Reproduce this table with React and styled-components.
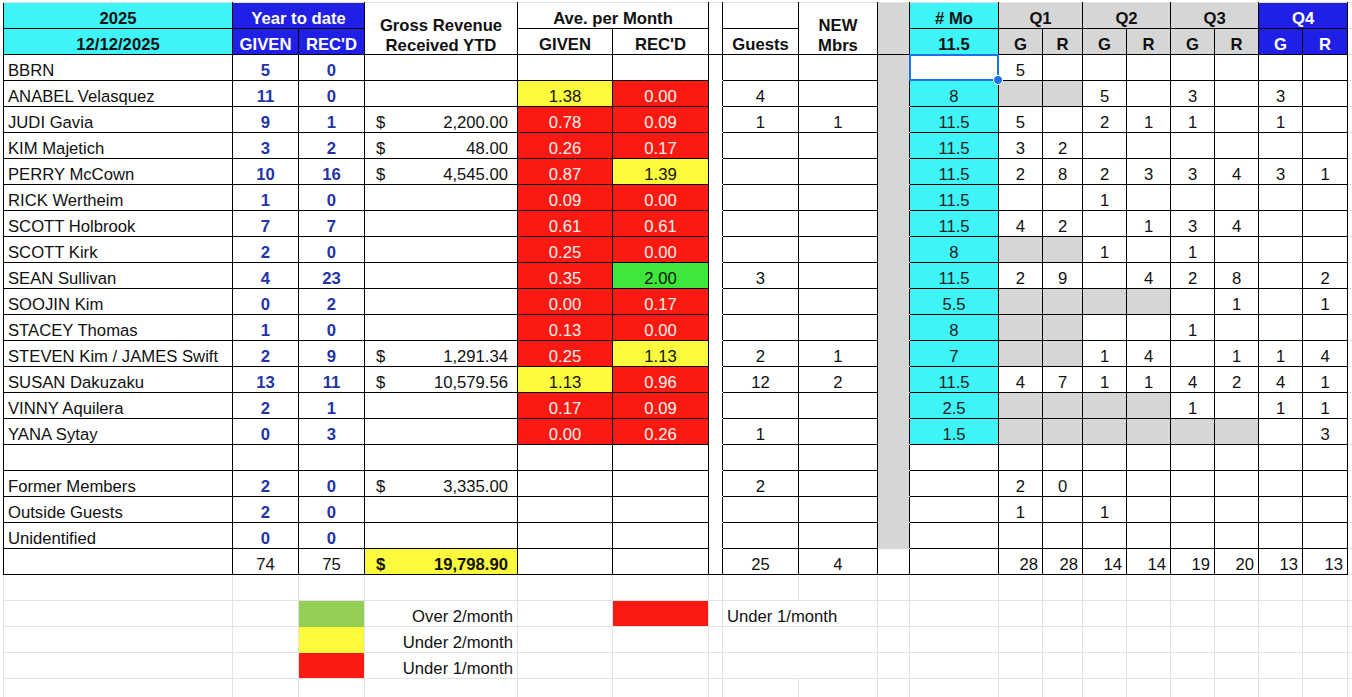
import React from "react";
import styled, { createGlobalStyle } from "styled-components";

const CYAN = "#3ff4f7";
const BLUE = "#1f1fe6";
const RED = "#fa1a12";
const YELLOW = "#fcfa3c";
const GREEN = "#3ee83a";
const LEGEND_GREEN = "#93cf57";
const GRAY = "#d6d6d6";
const GRID = "#e2e2e2";
const INK = "#111";
const NAVY = "#2333a8";
const RED_TEXT = "#fff1ee";

const COLS = [229, 66, 66, 153, 95, 96, 14, 76, 79, 32, 89, 44, 40, 44, 44, 44, 44, 44, 45, 60];

const members = [
  { name: "BBRN", given: 5, recd: 0, mo: "", q: ["5", "", "", "", "", "", "", ""], gray: 0, selected: true },
  { name: "ANABEL Velasquez", given: 11, recd: 0, ave: ["1.38", "0.00"], guests: "4", mo: "8", q: ["", "", "5", "", "3", "", "3", ""], gray: 2 },
  { name: "JUDI Gavia", given: 9, recd: 1, rev: "2,200.00", ave: ["0.78", "0.09"], guests: "1", newM: "1", mo: "11.5", q: ["5", "", "2", "1", "1", "", "1", ""], gray: 0 },
  { name: "KIM Majetich", given: 3, recd: 2, rev: "48.00", ave: ["0.26", "0.17"], mo: "11.5", q: ["3", "2", "", "", "", "", "", ""], gray: 0 },
  { name: "PERRY McCown", given: 10, recd: 16, rev: "4,545.00", ave: ["0.87", "1.39"], mo: "11.5", q: ["2", "8", "2", "3", "3", "4", "3", "1"], gray: 0 },
  { name: "RICK Wertheim", given: 1, recd: 0, ave: ["0.09", "0.00"], mo: "11.5", q: ["", "", "1", "", "", "", "", ""], gray: 0 },
  { name: "SCOTT Holbrook", given: 7, recd: 7, ave: ["0.61", "0.61"], mo: "11.5", q: ["4", "2", "", "1", "3", "4", "", ""], gray: 0 },
  { name: "SCOTT Kirk", given: 2, recd: 0, ave: ["0.25", "0.00"], mo: "8", q: ["", "", "1", "", "1", "", "", ""], gray: 2 },
  { name: "SEAN Sullivan", given: 4, recd: 23, ave: ["0.35", "2.00"], guests: "3", mo: "11.5", q: ["2", "9", "", "4", "2", "8", "", "2"], gray: 0 },
  { name: "SOOJIN Kim", given: 0, recd: 2, ave: ["0.00", "0.17"], mo: "5.5", q: ["", "", "", "", "", "1", "", "1"], gray: 4 },
  { name: "STACEY Thomas", given: 1, recd: 0, ave: ["0.13", "0.00"], mo: "8", q: ["", "", "", "", "1", "", "", ""], gray: 2 },
  { name: "STEVEN Kim / JAMES Swift", given: 2, recd: 9, rev: "1,291.34", ave: ["0.25", "1.13"], guests: "2", newM: "1", mo: "7", q: ["", "", "1", "4", "", "1", "1", "4"], gray: 2 },
  { name: "SUSAN Dakuzaku", given: 13, recd: 11, rev: "10,579.56", ave: ["1.13", "0.96"], guests: "12", newM: "2", mo: "11.5", q: ["4", "7", "1", "1", "4", "2", "4", "1"], gray: 0 },
  { name: "VINNY Aquilera", given: 2, recd: 1, ave: ["0.17", "0.09"], mo: "2.5", q: ["", "", "", "", "1", "", "1", "1"], gray: 4 },
  { name: "YANA Sytay", given: 0, recd: 3, ave: ["0.00", "0.26"], guests: "1", mo: "1.5", q: ["", "", "", "", "", "", "", "3"], gray: 6 },
];

const others = [
  { name: "Former Members", given: 2, recd: 0, rev: "3,335.00", guests: "2", q: ["2", "0", "", "", "", "", "", ""] },
  { name: "Outside Guests", given: 2, recd: 0, q: ["1", "", "1", "", "", "", "", ""] },
  { name: "Unidentified", given: 0, recd: 0, q: ["", "", "", "", "", "", "", ""] },
];

const quarterTotals = ["28", "28", "14", "14", "19", "20", "13", "13"];

const tone = (v) => {
  const n = parseFloat(v);
  if (n >= 2) return { bg: GREEN, color: INK };
  if (n >= 1) return { bg: YELLOW, color: INK };
  return { bg: RED, color: RED_TEXT };
};

const GlobalStyle = createGlobalStyle`
  html, body {
    margin: 0;
    padding: 0;
    background: #fff;
    overflow: hidden;
  }
  body {
    font-family: "Liberation Sans", Arial, sans-serif;
  }
`;

const Sheet = styled.table`
  border-collapse: collapse;
  table-layout: fixed;
  width: ${COLS.reduce((a, b) => a + b, 0)}px;
  margin: 2px 0 0 3px;
  font-size: 16.67px;
  color: ${INK};
`;

const Col = styled.col`
  width: ${(p) => p.$w}px;
`;

const Row = styled.tr`
  height: 26px;
`;

const Cell = styled.td`
  position: ${(p) => (p.$anchor ? "relative" : "static")};
  padding: 0 4px;
  line-height: 19.5px;
  vertical-align: bottom;
  white-space: nowrap;
  overflow: visible;
  text-align: ${(p) => p.$align || "center"};
  background: ${(p) => p.$bg || "#fff"};
  color: ${(p) => p.$color || INK};
  font-weight: ${(p) => (p.$bold ? 700 : 400)};
  border: 1px solid #000;
  border-top-color: ${(p) => p.$top || "#000"};
  border-right-color: ${(p) => p.$right || "#000"};
  border-bottom-color: ${(p) => p.$bottom || "#000"};
`;

const GridCell = styled.td`
  padding: 0 4px;
  line-height: 19.5px;
  vertical-align: bottom;
  white-space: nowrap;
  text-align: ${(p) => p.$align || "left"};
  background: ${(p) => p.$bg || "#fff"};
  border: 1px solid ${GRID};
  border-top-color: ${(p) => p.$top || GRID};
  border-bottom-color: ${(p) => p.$bottom || GRID};
`;

const HeadStack = styled.span`
  display: block;
  line-height: 20px;
  transform: translateY(2px);
`;

const Money = styled.span`
  display: flex;
  justify-content: space-between;
  padding: 0 5px 0 7px;
`;

const Selection = styled.span`
  position: absolute;
  left: -1px;
  top: -1px;
  right: -1px;
  bottom: -1px;
  border: 2px solid #1a73e8;
  pointer-events: none;
`;

const Handle = styled.span`
  position: absolute;
  right: -6px;
  bottom: -6px;
  width: 8px;
  height: 8px;
  border-radius: 50%;
  background: #1a73e8;
  border: 1px solid #fff;
`;

const Count = ({ value }) => (
  <Cell $bold $color={NAVY}>
    {value}
  </Cell>
);

const Revenue = ({ value, bold, bg }) => (
  <Cell $align="left" $bold={bold} $bg={bg}>
    {value && (
      <Money>
        <span>$</span>
        <span>{value}</span>
      </Money>
    )}
  </Cell>
);

const Average = ({ value }) => {
  if (!value) return <Cell />;
  const t = tone(value);
  return (
    <Cell $bg={t.bg} $color={t.color}>
      {value}
    </Cell>
  );
};

const Spacer = ({ bottom = "#fff" }) => <Cell $bottom={bottom} />;

const GrayBar = ({ bottom = GRAY }) => <Cell $bg={GRAY} $bottom={bottom} />;

const Quarters = ({ values, gray = 0, align }) =>
  values.map((v, i) => (
    <Cell key={i} $bg={i < gray ? GRAY : "#fff"} $align={align}>
      {v}
    </Cell>
  ));

const Header = () => (
  <>
    <Row>
      <Cell $bg={CYAN} $bold $top={GRID}>2025</Cell>
      <Cell colSpan={2} $bg={BLUE} $color="#fff" $bold $top={GRID}>Year to date</Cell>
      <Cell rowSpan={2} $bold $top={GRID}>
        <HeadStack>
          Gross Revenue
          <br />
          Received YTD
        </HeadStack>
      </Cell>
      <Cell colSpan={2} $bold $top={GRID}>Ave. per Month</Cell>
      <Cell rowSpan={2} $top={GRID} />
      <Cell $top={GRID} />
      <Cell rowSpan={2} $bold $top={GRID}>
        <HeadStack>
          NEW
          <br />
          Mbrs
        </HeadStack>
      </Cell>
      <Cell rowSpan={2} $bg={GRAY} $top={GRID} />
      <Cell $bg={CYAN} $bold $top={GRID}># Mo</Cell>
      <Cell colSpan={2} $bg={GRAY} $bold $top={GRID}>Q1</Cell>
      <Cell colSpan={2} $bg={GRAY} $bold $top={GRID}>Q2</Cell>
      <Cell colSpan={2} $bg={GRAY} $bold $top={GRID}>Q3</Cell>
      <Cell colSpan={2} $bg={BLUE} $color="#fff" $bold $top={GRID}>Q4</Cell>
      <GridCell />
    </Row>
    <Row>
      <Cell $bg={CYAN} $bold>12/12/2025</Cell>
      <Cell $bg={BLUE} $color="#fff" $bold>GIVEN</Cell>
      <Cell $bg={BLUE} $color="#fff" $bold>REC'D</Cell>
      <Cell $bold>GIVEN</Cell>
      <Cell $bold>REC'D</Cell>
      <Cell $bold>Guests</Cell>
      <Cell $bg={CYAN} $bold>11.5</Cell>
      {["G", "R", "G", "R", "G", "R"].map((l, i) => (
        <Cell key={i} $bg={GRAY} $bold>{l}</Cell>
      ))}
      <Cell $bg={BLUE} $color="#fff" $bold>G</Cell>
      <Cell $bg={BLUE} $color="#fff" $bold>R</Cell>
      <GridCell />
    </Row>
  </>
);

const MemberRow = ({ m }) => (
  <Row>
    <Cell $align="left">{m.name}</Cell>
    <Count value={m.given} />
    <Count value={m.recd} />
    <Revenue value={m.rev} />
    <Average value={m.ave && m.ave[0]} />
    <Average value={m.ave && m.ave[1]} />
    <Spacer />
    <Cell>{m.guests}</Cell>
    <Cell>{m.newM}</Cell>
    <GrayBar />
    <Cell $bg={m.selected ? "#fff" : CYAN} $color="#222" $anchor={m.selected}>
      {m.mo}
      {m.selected && (
        <Selection>
          <Handle />
        </Selection>
      )}
    </Cell>
    <Quarters values={m.q} gray={m.gray} />
    <GridCell />
  </Row>
);

const OtherRow = ({ m }) => (
  <Row>
    <Cell $align="left">{m.name}</Cell>
    <Count value={m.given} />
    <Count value={m.recd} />
    <Revenue value={m.rev} />
    <Cell />
    <Cell />
    <Spacer />
    <Cell>{m.guests}</Cell>
    <Cell />
    <GrayBar />
    <Cell />
    <Quarters values={m.q} />
    <GridCell />
  </Row>
);

const BlankRow = () => (
  <Row>
    <Cell />
    <Cell />
    <Cell />
    <Cell />
    <Cell />
    <Cell />
    <Spacer />
    <Cell />
    <Cell />
    <GrayBar />
    <Cell />
    <Quarters values={["", "", "", "", "", "", "", ""]} />
    <GridCell />
  </Row>
);

const TotalRow = () => (
  <Row>
    <Cell />
    <Cell>74</Cell>
    <Cell>75</Cell>
    <Revenue value="19,798.90" bold bg={YELLOW} />
    <Cell />
    <Cell />
    <Spacer bottom="#000" />
    <Cell>25</Cell>
    <Cell>4</Cell>
    <Cell />
    <Cell />
    <Quarters values={quarterTotals} align="right" />
    <GridCell />
  </Row>
);

const legend = [
  { swatch: LEGEND_GREEN, label: "Over 2/month", side: true },
  { swatch: YELLOW, label: "Under 2/month" },
  { swatch: RED, label: "Under 1/month" },
];

const LegendRow = ({ item }) => (
  <Row>
    <GridCell />
    <GridCell />
    <GridCell $bg={item.swatch} $bottom={item.swatch === RED ? GRID : "transparent"} />
    <GridCell $align="right">{item.label}</GridCell>
    <GridCell />
    <GridCell $bg={item.side ? RED : "#fff"} />
    <GridCell />
    <GridCell colSpan={2}>{item.side ? "Under 1/month" : ""}</GridCell>
    {Array.from({ length: 11 }).map((_, i) => (
      <GridCell key={i} />
    ))}
  </Row>
);

const EmptyRow = () => (
  <Row>
    {COLS.map((_, i) => (
      <GridCell key={i} />
    ))}
  </Row>
);

export default function App() {
  return (
    <>
      <GlobalStyle />
      <Sheet>
        <colgroup>
          {COLS.map((w, i) => (
            <Col key={i} $w={w} />
          ))}
        </colgroup>
        <tbody>
          <Header />
          {members.map((m) => (
            <MemberRow key={m.name} m={m} />
          ))}
          <BlankRow />
          {others.map((m) => (
            <OtherRow key={m.name} m={m} />
          ))}
          <TotalRow />
          <EmptyRow />
          {legend.map((item) => (
            <LegendRow key={item.label} item={item} />
          ))}
          <EmptyRow />
        </tbody>
      </Sheet>
    </>
  );
}
